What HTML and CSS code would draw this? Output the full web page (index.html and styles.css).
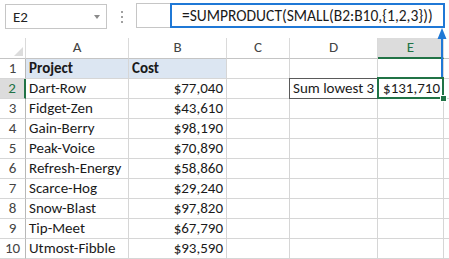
FILE: index.html
```html
<!DOCTYPE html>
<html lang="en">
<head>
    <meta charset="UTF-8">
    <title>SUMPRODUCT SMALL</title>
    <link rel="stylesheet" href="styles.css">
</head>
<body>
    <div class="toolbar">
        <div class="name-box">
            <span>E2</span>
            <span class="drop"></span>
        </div>
        <div class="dots"><i></i><i></i><i></i></div>
        <div class="fx-area">
            <div class="fx-gap"></div>
            <div class="fx-input">=SUMPRODUCT(SMALL(B2:B10,{1,2,3}))</div>
        </div>
    </div>

    <div class="sheet">
        <div class="hd corner"><span class="tri"></span></div>
        <div class="hd">A</div>
        <div class="hd">B</div>
        <div class="hd">C</div>
        <div class="hd">D</div>
        <div class="hd hd-active">E</div>
        <div class="hd"></div>

        <div class="rn">1</div>
        <div class="c fill b">Project</div>
        <div class="c fill b">Cost</div>
        <div class="c"></div><div class="c"></div><div class="c"></div><div class="c"></div>

        <div class="rn rn-active">2</div>
        <div class="c">Dart-Row</div>
        <div class="c num">$77,040</div>
        <div class="c"></div>
        <div class="c boxed">Sum lowest 3</div>
        <div class="c num selected">$131,710</div>
        <div class="c"></div>

        <div class="rn">3</div>
        <div class="c">Fidget-Zen</div>
        <div class="c num">$43,610</div>
        <div class="c"></div><div class="c"></div><div class="c"></div><div class="c"></div>

        <div class="rn">4</div>
        <div class="c">Gain-Berry</div>
        <div class="c num">$98,190</div>
        <div class="c"></div><div class="c"></div><div class="c"></div><div class="c"></div>

        <div class="rn">5</div>
        <div class="c">Peak-Voice</div>
        <div class="c num">$70,890</div>
        <div class="c"></div><div class="c"></div><div class="c"></div><div class="c"></div>

        <div class="rn">6</div>
        <div class="c">Refresh-Energy</div>
        <div class="c num">$58,860</div>
        <div class="c"></div><div class="c"></div><div class="c"></div><div class="c"></div>

        <div class="rn">7</div>
        <div class="c">Scarce-Hog</div>
        <div class="c num">$29,240</div>
        <div class="c"></div><div class="c"></div><div class="c"></div><div class="c"></div>

        <div class="rn">8</div>
        <div class="c">Snow-Blast</div>
        <div class="c num">$97,820</div>
        <div class="c"></div><div class="c"></div><div class="c"></div><div class="c"></div>

        <div class="rn">9</div>
        <div class="c">Tip-Meet</div>
        <div class="c num">$67,790</div>
        <div class="c"></div><div class="c"></div><div class="c"></div><div class="c"></div>

        <div class="rn">10</div>
        <div class="c">Utmost-Fibble</div>
        <div class="c num">$93,590</div>
        <div class="c"></div><div class="c"></div><div class="c"></div><div class="c"></div>
    </div>

    <!-- arrow from result cell up to the formula bar -->
    <svg class="arrow" width="12" height="52" viewBox="0 0 12 52">
        <line x1="6" y1="10" x2="6" y2="52" stroke="#1f78d6" stroke-width="2"/>
        <polygon points="6,1 1.5,12 10.5,12" fill="#1f78d6"/>
    </svg>
</body>
</html>
```

FILE: styles.css
```css
/* Sheet screenshot */
body {
    margin: 0;
    padding: 0;
    font-family: "Carlito", Lato, "Open Sans", sans-serif;
    font-size: 15px;
    color: #1a1a1a;
    background: #fff;
    position: relative;
    width: 449px;
    height: 259px;
    overflow: hidden;
}

/* Formula bar */
.toolbar {
    display: flex;
    align-items: flex-start;
    height: 38px;
    box-sizing: border-box;
    padding-top: 3px;
}

.name-box {
    display: flex;
    align-items: center;
    justify-content: space-between;
    box-sizing: border-box;
    width: 102px;
    height: 25px;
    margin: 1px 0 0 5px;
    padding: 0 6px 0 7px;
    border: 1px solid #c6c6c6;
    color: #222;
}

.name-box .drop {
    width: 0;
    height: 0;
    border-left: 3.5px solid transparent;
    border-right: 3.5px solid transparent;
    border-top: 4px solid #8a8a8a;
}

.dots {
    display: flex;
    flex-direction: column;
    gap: 3px;
    margin: 8px 0 0 14px;
}

.dots i {
    display: block;
    width: 2px;
    height: 2px;
    background: #a0a0a0;
}

.fx-area {
    display: flex;
    margin-left: 13px;
}

.fx-gap {
    box-sizing: border-box;
    width: 34px;
    height: 25px;
    border: 1px solid #c6c6c6;
    border-right: none;
}

.fx-input {
    box-sizing: border-box;
    width: 275px;
    height: 25px;
    border: 2px solid #1f78d6;
    padding-left: 10px;
    line-height: 21px;
    font-size: 15.5px;
    color: #1a1a1a;
    white-space: nowrap;
}

/* Grid */
.sheet {
    display: grid;
    grid-template-columns: 26px 103px 98px 63px 88px 66px 1fr;
    grid-template-rows: 21px repeat(10, 20px);
}

.sheet > div {
    box-sizing: border-box;
    border-right: 1px solid #d6d6d6;
    border-bottom: 1px solid #d6d6d6;
    line-height: 19px;
    white-space: nowrap;
    overflow: visible;
}

.hd {
    text-align: center;
    color: #444;
    border-bottom-color: #c4c4c4 !important;
    border-right-color: #dadada !important;
}

.corner {
    position: relative;
}

.corner .tri {
    position: absolute;
    right: 2px;
    bottom: 2px;
    width: 0;
    height: 0;
    border-left: 9px solid transparent;
    border-bottom: 9px solid #dcdcdc;
}

.hd-active {
    background: #dcdcdc;
    color: #217346;
    border-bottom: 2px solid #217346 !important;
}

.rn {
    text-align: center;
    color: #444;
    border-right-color: #b8b8b8 !important;
}

.rn-active {
    background: #dcdcdc;
    color: #217346;
    border-right: 2px solid #217346 !important;
}

.c {
    padding: 0 3px 0 3px;
}

.num {
    text-align: right;
}

.b {
    font-weight: bold;
}

.fill {
    background: #dce6f2;
}

.boxed {
    position: relative;
}

.boxed::after {
    content: "";
    position: absolute;
    top: -1px;
    left: -1px;
    right: -1px;
    bottom: -1px;
    border: 1px solid #5a5a5a;
}

.selected {
    position: relative;
    z-index: 1;
}

.selected::after {
    content: "";
    position: absolute;
    top: -2px;
    left: -1px;
    right: -1px;
    bottom: -1px;
    border: 2px solid #217346;
}

.selected::before {
    content: "";
    position: absolute;
    right: -4px;
    bottom: -4px;
    width: 5px;
    height: 5px;
    background: #217346;
    border: 1px solid #fff;
    z-index: 2;
}

.arrow {
    position: absolute;
    left: 436px;
    top: 27px;
}
```
